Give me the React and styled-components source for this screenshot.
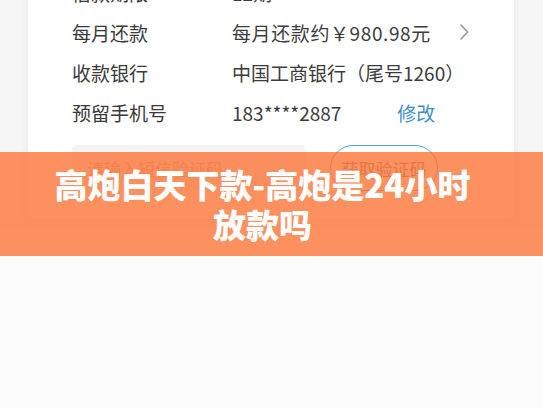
import React from 'react'
import styled, { createGlobalStyle } from 'styled-components'

const Global = createGlobalStyle`
  html, body { margin: 0; padding: 0; background: #fcfcfc; }
  body { font-family: "Noto Sans CJK SC", "Noto Sans", sans-serif; }
`

const Page = styled.div`
  position: relative;
  width: 543px;
  height: 408px;
  overflow: hidden;
  background: #fcfcfc;
`

const Screen = styled.div`
  background: #f6f6f6;
  height: 256px;
  padding: 0 29px 0 28px;
  box-sizing: border-box;
`

const Card = styled.div`
  margin-top: -28px;
  background: #fff;
  border-radius: 0 0 8px 8px;
  box-shadow: 0 0 10px rgba(0, 0, 0, 0.06);
  padding: 0 0 28px 44px;
`

const Row = styled.div`
  display: flex;
  align-items: center;
  height: 40px;
`

const Label = styled.div`
  width: 160px;
  font-size: 19px;
  color: #3a3a3a;
`

const Value = styled.div`
  flex: 1;
  display: flex;
  align-items: center;
  font-size: 19px;
  color: #3c3c3c;
`

const Wide = styled.span`
  letter-spacing: 0.6px;
`

const Link = styled.span`
  margin-left: 56px;
  color: #3d8fcc;
`

const Chevron = styled.svg`
  margin-left: auto;
  margin-right: 45px;
`

const CodeRow = styled.div`
  display: flex;
  align-items: center;
  margin-top: 13px;
  height: 46px;
`

const Input = styled.div`
  width: 218px;
  height: 46px;
  background: #f4f4f4;
  border-radius: 4px;
  display: flex;
  align-items: center;
  padding-left: 15px;
  font-size: 17px;
  color: #b0b0b0;
`

const CodeButton = styled.div`
  margin-left: 25px;
  width: 106px;
  height: 44px;
  border: 1.5px solid #4a9fd5;
  border-radius: 23px;
  display: flex;
  align-items: center;
  justify-content: center;
  font-size: 17px;
  color: #707070;
`

const Banner = styled.div`
  position: absolute;
  left: 0;
  right: 0;
  top: 152px;
  height: 104px;
  padding-right: 18px;
  background: rgba(253, 120, 60, 0.82);
  display: flex;
  flex-direction: column;
  align-items: center;
  justify-content: center;
  text-align: center;
`

const TitleLine = styled.div`
  font-size: 33px;
  line-height: 40px;
  font-weight: 900;
  color: #fff;
  white-space: nowrap;
`

const rows = [
  { label: '借款期限', value: '12期' },
  { label: '每月还款', value: '每月还款约￥980.98元', chevron: true, wide: true },
  { label: '收款银行', value: '中国工商银行（尾号1260）' },
  { label: '预留手机号', value: '183****2887', link: '修改' },
]

const App = () => {
  return (
    <Page>
      <Global />
      <Screen>
        <Card>
          {rows.map((r) => (
            <Row key={r.label}>
              <Label>{r.label}</Label>
              <Value>
                {r.wide ? <Wide>{r.value}</Wide> : r.value}
                {r.link && <Link>{r.link}</Link>}
                {r.chevron && (
                  <Chevron width="10" height="18" viewBox="0 0 10 18">
                    <path d="M1.5 1.5 L8.5 9 L1.5 16.5" fill="none" stroke="#9a9a9a" strokeWidth="1.6" />
                  </Chevron>
                )}
              </Value>
            </Row>
          ))}
          <CodeRow>
            <Input>请输入短信验证码</Input>
            <CodeButton>获取验证码</CodeButton>
          </CodeRow>
        </Card>
      </Screen>
      <Banner>
        <TitleLine>高炮白天下款-高炮是24小时</TitleLine>
        <TitleLine>放款吗</TitleLine>
      </Banner>
    </Page>
  )
}

export default App
